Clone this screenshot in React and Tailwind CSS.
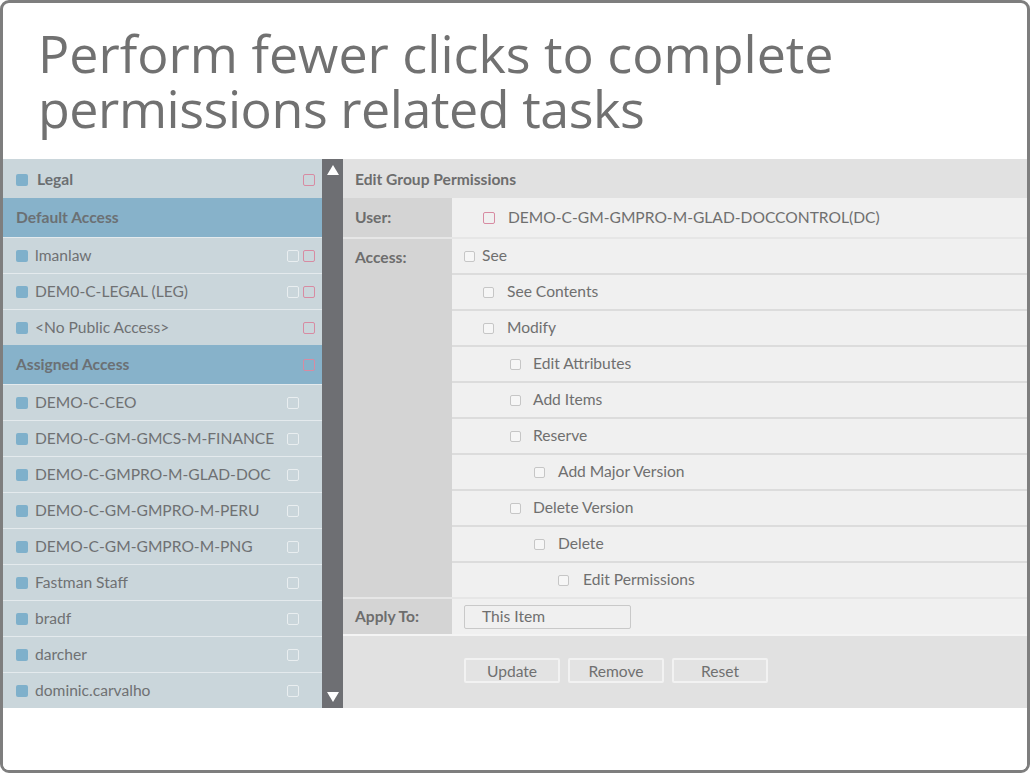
import React from "react";

const LIST = [
  { kind: "group", label: "Legal", pink: true },
  { kind: "header", label: "Default Access" },
  { kind: "item", label: "lmanlaw", white: true, pink: true },
  { kind: "item", label: "DEM0-C-LEGAL (LEG)", white: true, pink: true },
  { kind: "item", label: "<No Public Access>", pink: true },
  { kind: "header", label: "Assigned Access", pink: true },
  { kind: "item", label: "DEMO-C-CEO", white: true },
  { kind: "item", label: "DEMO-C-GM-GMCS-M-FINANCE", white: true },
  { kind: "item", label: "DEMO-C-GMPRO-M-GLAD-DOC", white: true },
  { kind: "item", label: "DEMO-C-GM-GMPRO-M-PERU", white: true },
  { kind: "item", label: "DEMO-C-GM-GMPRO-M-PNG", white: true },
  { kind: "item", label: "Fastman Staff", white: true },
  { kind: "item", label: "bradf", white: true },
  { kind: "item", label: "darcher", white: true },
  { kind: "item", label: "dominic.carvalho", white: true },
];

const ACCESS = [
  { label: "See", pad: "pl-[12px]", gap: "gap-[7px]" },
  { label: "See Contents", pad: "pl-[31px]", gap: "gap-[13px]" },
  { label: "Modify", pad: "pl-[31px]", gap: "gap-[13px]" },
  { label: "Edit Attributes", pad: "pl-[58px]", gap: "gap-[12px]" },
  { label: "Add Items", pad: "pl-[58px]", gap: "gap-[12px]" },
  { label: "Reserve", pad: "pl-[58px]", gap: "gap-[12px]" },
  { label: "Add Major Version", pad: "pl-[82px]", gap: "gap-[13px]" },
  { label: "Delete Version", pad: "pl-[58px]", gap: "gap-[12px]" },
  { label: "Delete", pad: "pl-[82px]", gap: "gap-[13px]" },
  { label: "Edit Permissions", pad: "pl-[106px]", gap: "gap-[14px]" },
];

const PinkBox = () => (
  <span className="block w-[12px] h-[12px] rounded-[2px] border-[1.5px] border-[#d88ba2]" />
);

const WhiteBox = () => (
  <span className="block w-[12px] h-[12px] rounded-[2px] border-[1.5px] border-[#e9eef0]" />
);

const GrayBox = () => (
  <span className="block w-[11px] h-[11px] rounded-[2px] border border-[#c6c6c6] bg-[#f6f6f6]" />
);

const Dot = () => <span className="block w-[12px] h-[12px] rounded-[2px] bg-[#7fb0cb]" />;

function ListRow({ row }) {
  if (row.kind === "header") {
    return (
      <div className="h-[39px] flex items-center justify-between pl-[13px] pr-[7px] pt-[1px] bg-[#87b2ca]">
        <span className="font-bold text-[#6b7074]">{row.label}</span>
        {row.pink && <PinkBox />}
      </div>
    );
  }
  const bold = row.kind === "group";
  return (
    <div
      className={`flex items-center pl-[13px] pr-[7px] ${
        bold ? "h-[39px] pt-[2px]" : "h-[36px] border-t border-[#e4eaed]"
      }`}
    >
      <Dot />
      <span className={bold ? "ml-[9px] font-bold text-[#6b6f72]" : "ml-[7px] text-[#6f7173]"}>
        {row.label}
      </span>
      <div className="ml-auto flex items-center gap-[4px]">
        {row.white && <WhiteBox />}
        {row.pink ? <PinkBox /> : <span className="w-[12px]" />}
      </div>
    </div>
  );
}

function Btn({ children }) {
  return (
    <button className="w-[96px] h-[25px] border-2 border-[#f2f2f2] bg-[#e3e3e3] text-[#707070] rounded-[2px]">
      {children}
    </button>
  );
}

export default function App() {
  return (
    <div className="w-[1030px] h-[773px] bg-white" style={{ fontFamily: "Lato, 'Noto Sans', sans-serif" }}>
      <div className="h-full border-[3px] border-[#7e7e7e] rounded-[9px] overflow-hidden flex flex-col">
        <div className="h-[156px] shrink-0 pl-[35px] pt-[22px]">
          <h1
            className="text-[52px] leading-[55px] text-[#717171]"
            style={{ fontFamily: "'Open Sans', 'Noto Sans', sans-serif" }}
          >
            <span className="block">Perform fewer clicks to complete</span>
            <span className="block tracking-[-0.45px]">permissions related tasks</span>
          </h1>
        </div>

        <div className="flex h-[549px] shrink-0 text-[15.6px]">
          {/* left list */}
          <div className="w-[319px] bg-[#cad6db] flex flex-col">
            {LIST.map((row) => (
              <ListRow key={row.label} row={row} />
            ))}
          </div>

          {/* scrollbar */}
          <div className="w-[21px] bg-[#6e6f73] flex flex-col items-center justify-between py-[6px]">
            <svg width="12" height="10" viewBox="0 0 12 10">
              <path d="M6 0 L12 10 L0 10 Z" fill="#ffffff" />
            </svg>
            <svg width="12" height="10" viewBox="0 0 12 10">
              <path d="M0 0 L12 0 L6 10 Z" fill="#ffffff" />
            </svg>
          </div>

          {/* permissions panel */}
          <div className="flex-1 flex flex-col bg-[#e1e1e1]">
            <div className="h-[39px] flex items-center pl-[12px] pt-[2px] font-bold text-[#6d6d6d]">
              Edit Group Permissions
            </div>

            <div className="flex h-[39px]">
              <div className="w-[109px] bg-[#d4d4d4] flex items-center pl-[12px] font-bold text-[#6d6d6d]">
                User:
              </div>
              <div className="flex-1 bg-[#f0f0f0] flex items-center pl-[31px] gap-[13px] text-[#6f6f6f]">
                <PinkBox />
                DEMO-C-GM-GMPRO-M-GLAD-DOCCONTROL(DC)
              </div>
            </div>

            <div className="flex border-t-2 border-[#e6e6e6]">
              <div className="w-[109px] bg-[#d4d4d4] pl-[12px] pt-[7px] font-bold text-[#6d6d6d]">
                Access:
              </div>
              <div className="flex-1 flex flex-col bg-[#f0f0f0]">
                {ACCESS.map((a, i) => (
                  <div
                    key={a.label}
                    className={`flex items-center text-[#6f6f6f] ${a.pad} ${a.gap} ${
                      i > 0 ? "h-[36px] border-t-2 border-[#dcdcdc]" : "h-[34px]"
                    }`}
                  >
                    <GrayBox />
                    {a.label}
                  </div>
                ))}
              </div>
            </div>

            <div className="flex h-[37px] border-t-2 border-[#e6e6e6]">
              <div className="w-[109px] bg-[#d4d4d4] flex items-center pl-[12px] font-bold text-[#6d6d6d]">
                Apply To:
              </div>
              <div className="flex-1 bg-[#f0f0f0] flex items-center pl-[12px]">
                <div className="w-[167px] h-[24px] border-[1.5px] border-[#c9c9c9] rounded-[2px] flex items-center pl-[17px] text-[#6f6f6f]">
                  This Item
                </div>
              </div>
            </div>

            <div className="flex-1 border-t-2 border-[#f4f4f4] flex items-center gap-[8px] pl-[121px] pb-[3px]">
              <Btn>Update</Btn>
              <Btn>Remove</Btn>
              <Btn>Reset</Btn>
            </div>
          </div>
        </div>

        <div className="flex-1 bg-white" />
      </div>
    </div>
  );
}
